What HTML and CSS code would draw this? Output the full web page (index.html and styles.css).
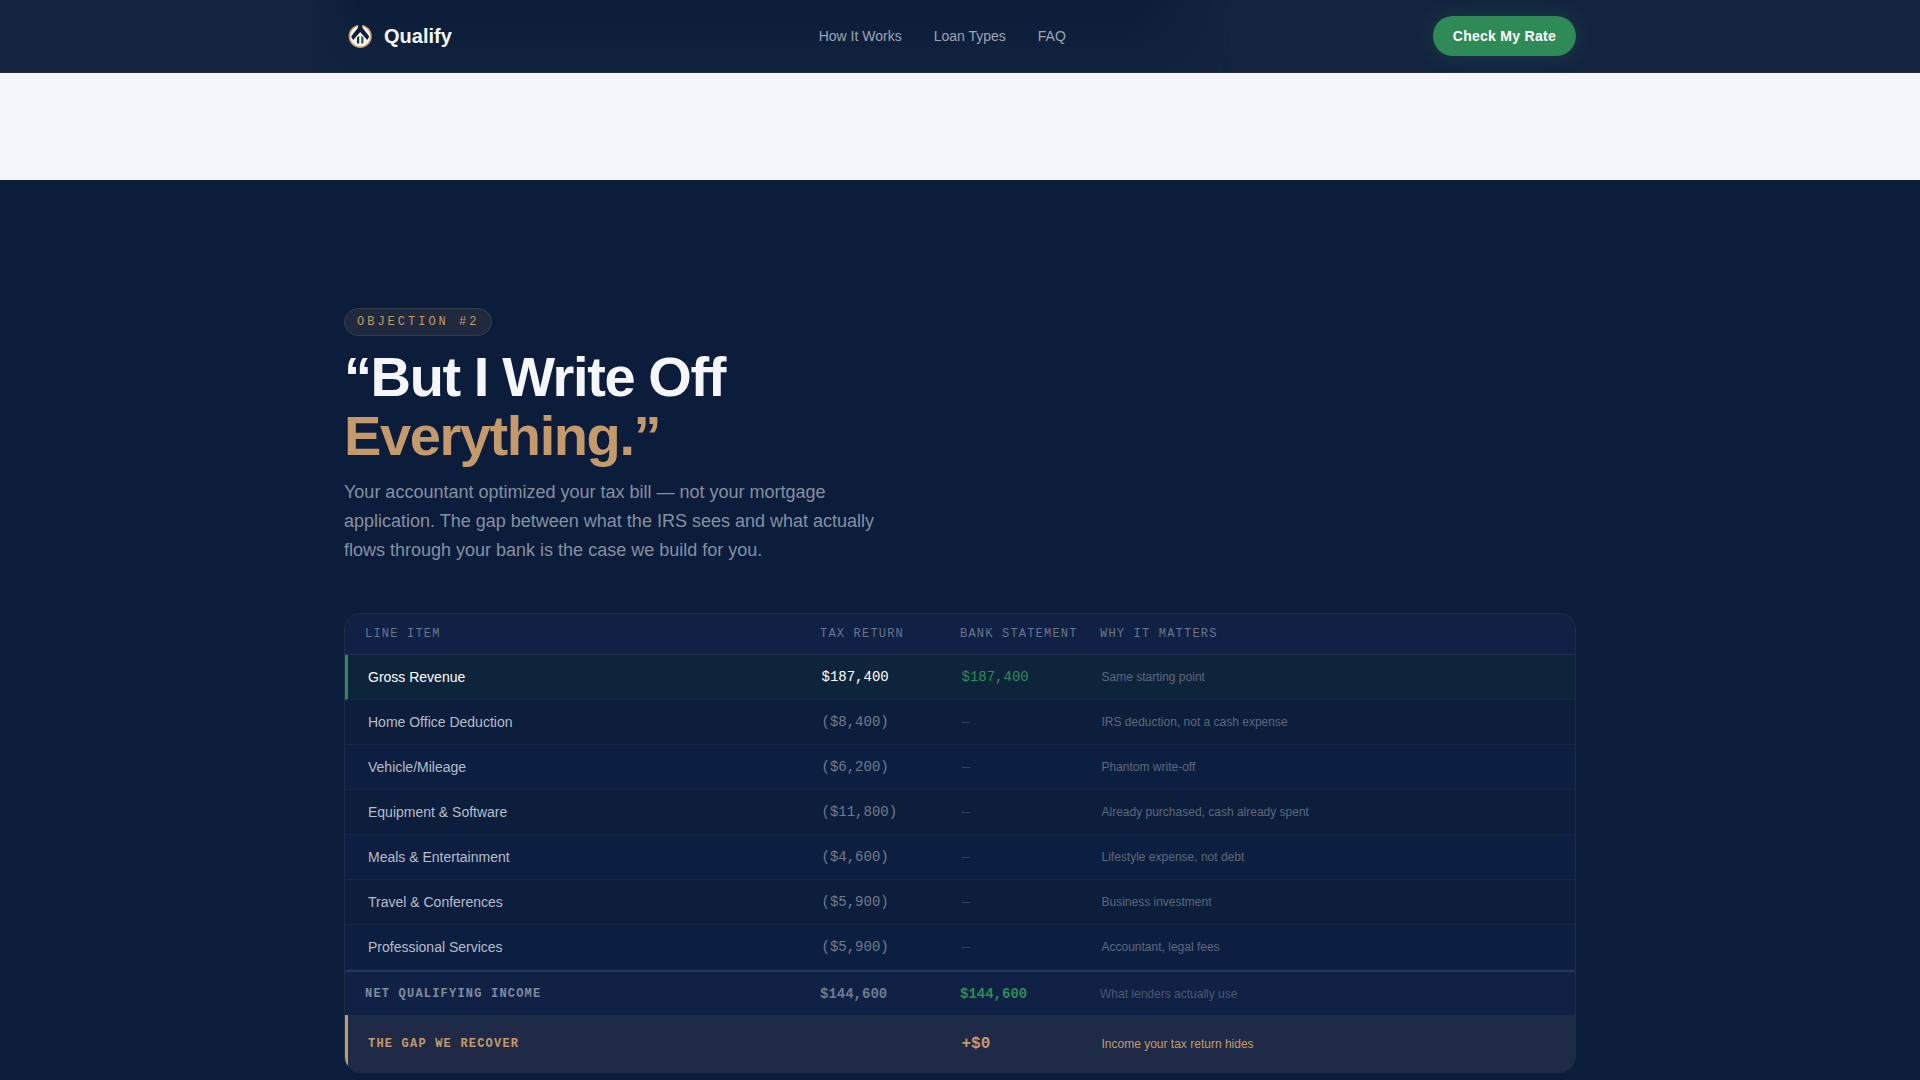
FILE: index.html
```html
<!DOCTYPE html>
<html lang="en">
<head>
<meta charset="utf-8">
<meta name="viewport" content="width=device-width, initial-scale=1">
<title>Qualify</title>
<link rel="stylesheet" href="styles.css">
</head>
<body>
<header class="site-header">
  <div class="container nav">
    <a class="brand" href="#">
      <svg class="brand-mark" viewBox="0 0 32 32" aria-hidden="true">
        <circle cx="16.200" cy="16.300" r="10.900" fill="#f8f4ee" stroke="#c49a6c" stroke-width="1.400"/>
        <path d="M14.600 4H17.800L18.600 8L25.300 16.500L23.200 20L16.200 12L9.200 20L7.100 16.500L13.800 8Z" fill="#0b1d3a"/>
        <path d="M13 17.500L15.200 15.800V23.500H13Z" fill="#1b3245"/>
        <path d="M17.200 15.800L19.400 17.500V23.500H17.200Z" fill="#24564b"/>
      </svg>
      <span>Qualify</span>
    </a>
    <nav class="nav-links" aria-label="Main">
      <a href="#how">How It Works</a>
      <a href="#loans">Loan Types</a>
      <a href="#faq">FAQ</a>
    </nav>
    <button class="cta" type="button">Check My Rate</button>
  </div>
</header>
<main>
  <section class="light-band"></section>
  <section class="objection">
    <div class="container">
      <span class="badge">OBJECTION #2</span>
      <h1 class="title">“But I Write Off<br><em>Everything.”</em></h1>
      <p class="lede">Your accountant optimized your tax bill — not your mortgage application. The gap between what the IRS sees and what actually flows through your bank is the case we build for you.</p>
      <table class="ledger">
        <thead>
          <tr><th scope="col">LINE ITEM</th><th scope="col">TAX RETURN</th><th scope="col">BANK STATEMENT</th><th scope="col">WHY IT MATTERS</th></tr>
        </thead>
        <tbody>
          <tr class="gross"><th scope="row">Gross Revenue</th><td class="amount">$187,400</td><td class="bank">$187,400</td><td class="why">Same starting point</td></tr>
          <tr><th scope="row">Home Office Deduction</th><td class="amount">($8,400)</td><td class="bank">—</td><td class="why">IRS deduction, not a cash expense</td></tr>
          <tr><th scope="row">Vehicle/Mileage</th><td class="amount">($6,200)</td><td class="bank">—</td><td class="why">Phantom write-off</td></tr>
          <tr><th scope="row">Equipment &amp; Software</th><td class="amount">($11,800)</td><td class="bank">—</td><td class="why">Already purchased, cash already spent</td></tr>
          <tr><th scope="row">Meals &amp; Entertainment</th><td class="amount">($4,600)</td><td class="bank">—</td><td class="why">Lifestyle expense, not debt</td></tr>
          <tr><th scope="row">Travel &amp; Conferences</th><td class="amount">($5,900)</td><td class="bank">—</td><td class="why">Business investment</td></tr>
          <tr><th scope="row">Professional Services</th><td class="amount">($5,900)</td><td class="bank">—</td><td class="why">Accountant, legal fees</td></tr>
        </tbody>
        <tfoot>
          <tr class="net"><th scope="row">NET QUALIFYING INCOME</th><td class="amount">$144,600</td><td class="bank">$144,600</td><td class="why">What lenders actually use</td></tr>
          <tr class="gap"><th scope="row">THE GAP WE RECOVER</th><td></td><td class="bank">+$0</td><td class="why">Income your tax return hides</td></tr>
        </tfoot>
      </table>
    </div>
  </section>
</main>
</body>
</html>
```
FILE: styles.css
```css
:root {
  --navy: #0b1d3a;
  --paper: #f4f6fb;
  --gold: #c49a6c;
  --green: #2e8b57;
  --mono: "Liberation Mono", monospace;
}

* { box-sizing: border-box; }

body {
  margin: 0;
  background: var(--navy);
  color: var(--paper);
  font-family: "Liberation Sans", Arial, sans-serif;
}

.container {
  width: 100%;
  max-width: 1280px;
  margin: 0 auto;
  padding: 0 24px;
}

/* Header */
.site-header {
  position: sticky;
  top: 0;
  z-index: 1;
  background: #14243f;
  border-bottom: 1px solid #232f46;
}

.nav {
  position: relative;
  display: flex;
  align-items: center;
  justify-content: space-between;
  height: 72px;
}

/* Soft dark glow behind the bar */
.site-header::before {
  content: "";
  position: absolute;
  inset: 0;
  background: linear-gradient(#0b1d3a, rgba(11, 29, 58, 0.2));
  -webkit-mask-image: linear-gradient(90deg, transparent 16%, #000 19%, #000 59%, transparent 64%);
  mask-image: linear-gradient(90deg, transparent 16%, #000 19%, #000 59%, transparent 64%);
}

.brand {
  display: flex;
  align-items: center;
  gap: 8px;
  color: var(--paper);
  font-size: 20px;
  font-weight: 700;
  text-decoration: none;
}

.brand-mark { width: 32px; height: 32px; }

.nav-links { display: flex; gap: 32px; }

.nav-links a {
  color: #9da5b3;
  font-size: 14px;
  text-decoration: none;
}

.cta {
  height: 40px;
  padding: 0 20px;
  border: 0;
  border-radius: 20px;
  background: var(--green);
  box-shadow: 0 0 20px rgba(46, 139, 87, 0.25);
  color: #fff;
  font: 700 14px "Liberation Sans", Arial, sans-serif;
  letter-spacing: 0.02em;
}

/* Sections */
.light-band { height: 107px; background: var(--paper); }

.objection { padding: 128px 0; }

.badge {
  display: block;
  width: fit-content;
  padding: 5px 12px;
  border: 1px solid #373d48;
  border-radius: 14px;
  background: #1f2a3f;
  color: var(--gold);
  font: 12px/16px var(--mono);
  letter-spacing: 0.25em;
}

.title {
  margin: 11px 0 13px;
  font-size: 56px;
  font-weight: 700;
  line-height: 59px;
  letter-spacing: -0.025em;
}

.title em { color: var(--gold); font-style: normal; }

.lede {
  max-width: 560px;
  margin: 0 0 48px;
  color: #8690a1;
  font-size: 18px;
  line-height: 29px;
}

/* Ledger */
.ledger {
  display: block;
  overflow: hidden;
  border: 1px solid #1d2c47;
  border-radius: 16px;
  background: #0c1f3f;
}

.ledger thead, .ledger tbody, .ledger tfoot { display: block; }

.ledger tr {
  display: grid;
  grid-template-columns: 1fr 140px 140px 1fr;
  align-items: center;
}

.ledger th, .ledger td {
  padding: 0;
  font-weight: 400;
  text-align: left;
}

.ledger thead tr {
  height: 41px;
  padding: 0 20px;
  border-bottom: 1px solid #22314d;
  background: #112145;
}

.ledger thead th {
  color: #68748c;
  font: 12px/16px var(--mono);
  letter-spacing: 0.1em;
}

.ledger tbody tr {
  height: 45px;
  padding: 0 20px;
  border-bottom: 1px solid #142644;
  border-left: 3px solid transparent;
}

.ledger tbody tr:nth-child(even) { background: #0c1e3b; }
.ledger tbody tr:nth-child(odd) { background: #0d1f41; }

.ledger tbody th {
  color: #b6bdca;
  font-size: 14px;
}

.ledger .amount, .ledger .bank {
  color: #6f7b90;
  font: 14px/20px var(--mono);
}

.ledger tbody .bank { color: #2a4557; }

.ledger .why { color: #5c687d; font-size: 12px; }

.ledger tbody tr.gross:first-child {
  border-left-color: var(--green);
  background: #0e243b;
}

.ledger tbody .gross th, .ledger .gross .amount { color: #fff; }
.ledger tbody .gross .bank { color: var(--green); }

.ledger tfoot tr { padding: 0 20px; }

.ledger tfoot th {
  font: 700 12px/16px var(--mono);
  letter-spacing: 0.1em;
}

.ledger .net {
  height: 45px;
  border-top: 2px solid #263650;
  background: #112145;
}

.ledger .net th { color: #818b9f; }
.ledger .net .amount { color: #6f7b90; font-weight: 700; }
.ledger .net .bank { color: var(--green); font-weight: 700; }
.ledger .net .why { color: #4a5872; }

.ledger .gap {
  height: 57px;
  border-left: 3px solid var(--gold);
  background: #1f2a46;
}

.ledger .gap th, .ledger .gap .why { color: var(--gold); }
.ledger .gap .bank { color: var(--gold); font-size: 16px; font-weight: 700; }
```
